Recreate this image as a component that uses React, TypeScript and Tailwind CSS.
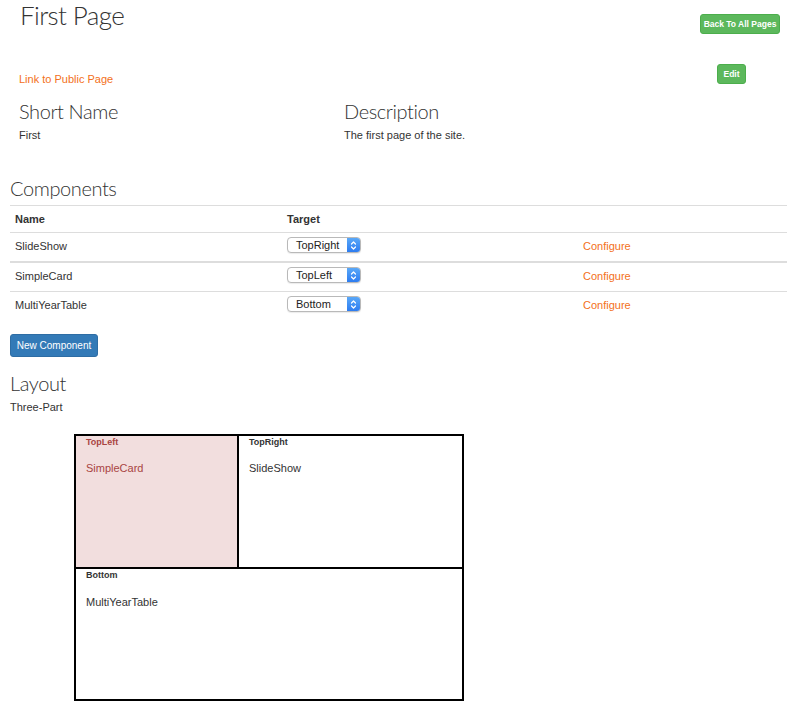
import React from 'react';

const body = "font-['Liberation_Sans',Arial,sans-serif]";
const head = "font-['Lato','Open_Sans',sans-serif] font-light";

const components = [
  { name: 'SlideShow', target: 'TopRight' },
  { name: 'SimpleCard', target: 'TopLeft' },
  { name: 'MultiYearTable', target: 'Bottom' },
];

function FakeSelect({ value }: { value: string }) {
  return (
    <div className="flex h-[16px] w-[74px] items-stretch overflow-hidden rounded-[4px] border border-[#b9b9b9] bg-white shadow-[0_1px_1px_rgba(0,0,0,0.08)]">
      <span className="flex-1 pl-[8px] text-[11px] leading-[14px] text-[#222]">{value}</span>
      <span className="flex w-[13px] items-center justify-center bg-gradient-to-b from-[#5aa8f8] to-[#2d7cf0]">
        <svg width="7" height="11" viewBox="0 0 7 11" fill="none" stroke="white" strokeWidth="1.2" strokeLinecap="round" strokeLinejoin="round">
          <path d="M1.5 4 L3.5 2 L5.5 4" />
          <path d="M1.5 7 L3.5 9 L5.5 7" />
        </svg>
      </span>
    </div>
  );
}

export default function App() {
  return (
    <div className={`w-[787px] h-[713px] overflow-hidden bg-white text-[#333] ${body}`}>
      {/* Header */}
      <div className="flex justify-between">
        <h1 className={`ml-[20px] text-[26px] leading-[30px] tracking-[-0.6px] text-[#333] ${head}`}>First Page</h1>
        <button className="mt-[14px] mr-[7px] h-[20px] w-[80px] rounded-[3px] border border-[#4cae4c] bg-[#5cb85c] text-[8.5px] font-bold text-white">
          Back To All Pages
        </button>
      </div>

      <div className="mt-[30px] flex items-start justify-between">
        <a className="ml-[19px] mt-[9px] text-[11px] leading-[12px] text-[#f37021]">Link to Public Page</a>
        <button className="mr-[41px] h-[20px] w-[29px] rounded-[3px] border border-[#4cae4c] bg-[#5cb85c] text-[8.5px] font-bold text-white">
          Edit
        </button>
      </div>

      {/* Info */}
      <div className="ml-[19px] mt-[16px] grid grid-cols-[325px_1fr]">
        <div>
          <h3 className={`text-[20px] leading-[20px] tracking-[-0.4px] ${head}`}>Short Name</h3>
          <p className="mt-[8px] text-[11px] leading-[12px]">First</p>
        </div>
        <div>
          <h3 className={`text-[20px] leading-[20px] tracking-[-0.4px] ${head}`}>Description</h3>
          <p className="mt-[8px] text-[11px] leading-[12px]">The first page of the site.</p>
        </div>
      </div>

      {/* Components */}
      <div className="ml-[10px]">
        <h2 className={`mt-[37px] text-[20px] leading-[20px] tracking-[-0.4px] ${head}`}>Components</h2>
        <div className="mt-[7px] text-[11px]">
          <div className="grid h-[28px] grid-cols-[272px_296px_1fr] items-center border-y border-[#ddd] font-bold">
            <div className="pl-[5px]">Name</div>
            <div className="pl-[5px]">Target</div>
            <div />
          </div>
          {components.map((c, i) => (
            <div
              key={c.name}
              className={`grid h-[29px] grid-cols-[272px_296px_1fr] items-start pt-[4px] ${
                i === 0 ? 'h-[30px] border-b-2 border-[#ddd]' : i === 1 ? 'border-b border-[#ddd]' : ''
              }`}
            >
              <div className="pl-[5px] pt-[1px] leading-[16px]">{c.name}</div>
              <div className="pl-[5px]">
                <FakeSelect value={c.target} />
              </div>
              <div className="pl-[5px] pt-[1px] leading-[16px] text-[#f37021]">Configure</div>
            </div>
          ))}
        </div>

        <button className="mt-[13px] h-[23px] w-[88px] rounded-[3px] border border-[#2e6da4] bg-[#337ab7] text-[10px] font-normal text-white">
          New Component
        </button>

        <h2 className={`mt-[16px] text-[20px] leading-[20px] tracking-[-0.4px] ${head}`}>Layout</h2>
        <p className="mt-[8px] text-[11px] leading-[12px]">Three-Part</p>
      </div>

      {/* Layout preview */}
      <div className="ml-[74px] mt-[21px] flex h-[267px] w-[390px] flex-col border-2 border-black text-[11px]">
        <div className="flex h-[133px] border-b-2 border-black">
          <div className="w-[163px] border-r-2 border-black bg-[#f2dede] pl-[10px] text-[#a94442]">
            <div className="text-[9px] font-bold leading-[12px]">TopLeft</div>
            <div className="mt-[14px] leading-[12px]">SimpleCard</div>
          </div>
          <div className="flex-1 pl-[10px]">
            <div className="text-[9px] font-bold leading-[12px]">TopRight</div>
            <div className="mt-[14px] leading-[12px]">SlideShow</div>
          </div>
        </div>
        <div className="flex-1 pl-[10px]">
          <div className="text-[9px] font-bold leading-[12px]">Bottom</div>
          <div className="mt-[15px] leading-[12px]">MultiYearTable</div>
        </div>
      </div>
    </div>
  );
}
